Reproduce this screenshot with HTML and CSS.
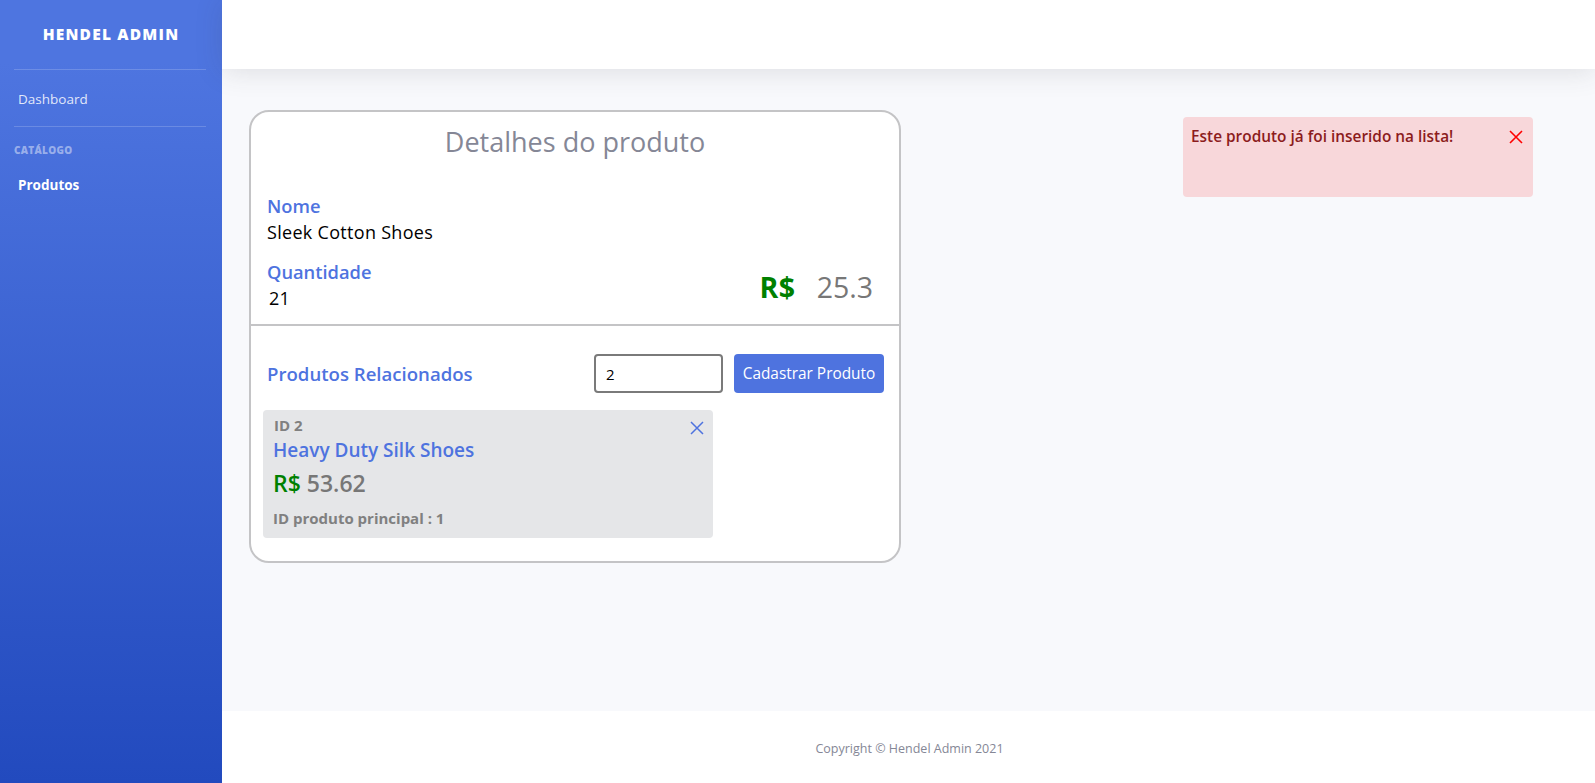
FILE: index.html
```html
<!DOCTYPE html>
<html lang="pt-BR">
<head>
<meta charset="utf-8">
<title>Hendel Admin</title>
<link rel="stylesheet" href="styles.css">
</head>
<body>
<div class="wrapper">
  <aside class="sidebar">
    <div class="brand">Hendel Admin</div>
    <hr class="side-divider">
    <a class="nav-link" href="#">Dashboard</a>
    <hr class="side-divider">
    <div class="side-heading">Catálogo</div>
    <a class="nav-link active" href="#">Produtos</a>
  </aside>
  <div class="content-col">
    <header class="topbar"></header>
    <main class="main">
      <section class="card">
        <div class="card-top">
          <h3 class="card-title">Detalhes do produto</h3>
          <div class="field">
            <div class="label">Nome</div>
            <div class="value">Sleek Cotton Shoes</div>
          </div>
          <div class="field-row">
            <div class="field">
              <div class="label">Quantidade</div>
              <div class="value qty">21</div>
            </div>
            <div class="price"><span class="currency">R$</span><span class="amount">25.3</span></div>
          </div>
        </div>
        <div class="card-bottom">
          <div class="related-head">
            <h4 class="related-title">Produtos Relacionados</h4>
            <div class="add-form">
              <input class="id-input" type="text" value="2">
              <button class="btn-primary" type="button">Cadastrar Produto</button>
            </div>
          </div>
          <div class="related-list">
            <div class="related-item">
              <button class="item-close" type="button" aria-label="Remover">
                <svg viewBox="0 0 14 14" width="14" height="14"><path d="M1 1L13 13M13 1L1 13" stroke="currentColor" stroke-width="1.5" fill="none"/></svg>
              </button>
              <div class="item-id">ID 2</div>
              <div class="item-name">Heavy Duty Silk Shoes</div>
              <div class="item-price"><span class="currency">R$</span> 53.62</div>
              <div class="item-parent">ID produto principal : 1</div>
            </div>
          </div>
        </div>
      </section>
    </main>
    <footer class="footer">Copyright © Hendel Admin 2021</footer>
  </div>
</div>
<div class="toast">
  <span class="toast-text">Este produto já foi inserido na lista!</span>
  <button class="toast-close" type="button" aria-label="Fechar">
    <svg viewBox="0 0 14 14" width="14" height="14"><path d="M1 1L13 13M13 1L1 13" stroke="currentColor" stroke-width="1.6" fill="none"/></svg>
  </button>
</div>
</body>
</html>
```

FILE: styles.css
```css
* { box-sizing: border-box; }

html, body {
  margin: 0;
  padding: 0;
  height: 100%;
}

body {
  font-family: "Open Sans", "Liberation Sans", sans-serif;
  font-size: 16px;
  color: #000;
  background: #fff;
}

.wrapper {
  display: flex;
  min-height: 783px;
}

/* Sidebar */
.sidebar {
  width: 222px;
  flex: 0 0 222px;
  background: linear-gradient(180deg, #4e75e0 8%, #224abe 100%);
  display: flex;
  flex-direction: column;
}

.brand {
  height: 69px;
  display: flex;
  align-items: center;
  justify-content: center;
  color: #fff;
  font-weight: 800;
  font-size: 15.5px;
  text-transform: uppercase;
  letter-spacing: 1.2px;
  padding-bottom: 2px;
}

.side-divider {
  margin: 0 16px 0 14px;
  border: 0;
  border-top: 1px solid rgba(255, 255, 255, 0.18);
  height: 0;
}

.nav-link {
  display: block;
  color: rgba(255, 255, 255, 0.85);
  text-decoration: none;
  font-size: 13.5px;
  line-height: 20px;
  padding: 19px 18px 17px;
}

.nav-link.active {
  color: #fff;
  font-weight: 700;
  padding: 18px 18px 12px;
}

.side-heading {
  color: rgba(255, 255, 255, 0.45);
  font-size: 10px;
  font-weight: 800;
  text-transform: uppercase;
  letter-spacing: 0.3px;
  padding: 16px 14px 0;
  line-height: 14px;
}

/* Content */
.content-col {
  flex: 1;
  display: flex;
  flex-direction: column;
  min-width: 0;
}

.topbar {
  height: 69px;
  background: #fff;
  box-shadow: 0 2px 28px 0 rgba(58, 59, 69, 0.15);
  position: relative;
  z-index: 1;
}

.main {
  flex: 1;
  background: #f8f9fc;
  padding: 41px 0 0 27px;
}

.footer {
  height: 72px;
  background: #fff;
  display: flex;
  align-items: center;
  justify-content: center;
  color: #858796;
  font-size: 12.5px;
  padding: 2px 0 0 2px;
}

/* Card */
.card {
  width: 652px;
  background: #fff;
  border: 2px solid #c4c4c6;
  border-radius: 20px;
}

.card-top {
  padding: 13px 16px 12px;
}

.card-title {
  margin: 0;
  text-align: center;
  font-size: 27px;
  font-weight: 400;
  line-height: 34px;
  color: #858796;
}

.field {
  margin-top: 33px;
}

.field-row {
  display: flex;
  align-items: center;
  justify-content: space-between;
  margin-top: 12px;
}

.field-row .field {
  margin-top: 0;
}

.label {
  color: #4e73df;
  font-size: 18.3px;
  font-weight: 600;
  line-height: 27px;
}

.value {
  font-size: 18px;
  letter-spacing: 0.3px;
  line-height: 27px;
  color: #000;
}

.qty {
  padding-left: 2px;
}

.price {
  font-size: 28.5px;
  line-height: 34px;
  padding: 4px 10px 0 0;
}

.currency {
  color: #008000;
  font-weight: 700;
  letter-spacing: 0.5px;
}

.amount {
  color: #777;
  margin-left: 21px;
}

.card-bottom {
  border-top: 2px solid #c4c4c6;
  padding: 28px 15px 23px 12px;
}

.related-head {
  display: flex;
  align-items: center;
  justify-content: space-between;
  height: 39px;
}

.related-title {
  margin: 0 0 0 4px;
  color: #4e73df;
  font-size: 18.6px;
  font-weight: 600;
}

.add-form {
  display: flex;
  gap: 11px;
}

.id-input {
  width: 129px;
  height: 39px;
  border: 2px solid #7a7a7a;
  border-radius: 4px;
  padding: 0 10px;
  font-family: inherit;
  font-size: 15px;
  color: #000;
  background: #fff;
}

.btn-primary {
  height: 39px;
  width: 150px;
  border: 0;
  border-radius: 4px;
  background: #4e73df;
  color: #fff;
  font-family: inherit;
  font-size: 15.4px;
  padding: 0;
}

.related-list {
  margin-top: 17px;
}

.related-item {
  position: relative;
  width: 450px;
  height: 128px;
  background: #e5e6e8;
  border-radius: 4px;
  padding: 5px 11px 9px 10px;
}

.item-close {
  position: absolute;
  top: 11px;
  right: 9px;
  width: 14px;
  height: 14px;
  padding: 0;
  border: 0;
  background: none;
  color: #4e73df;
  display: flex;
}

.item-id {
  color: #808080;
  font-size: 15px;
  font-weight: 700;
  line-height: 20px;
  padding-left: 1px;
}

.item-name {
  margin-top: 2px;
  color: #4e73df;
  font-size: 19px;
  font-weight: 600;
  line-height: 26px;
}

.item-price {
  margin-top: 5px;
  color: #777;
  font-size: 23px;
  font-weight: 600;
  line-height: 30px;
}

.item-price .currency {
  font-weight: 600;
  letter-spacing: 0;
}

.item-parent {
  margin-top: 10px;
  color: #808080;
  font-size: 15px;
  font-weight: 700;
  line-height: 20px;
}

/* Toast */
.toast {
  position: fixed;
  top: 117px;
  right: 62px;
  width: 350px;
  height: 80px;
  background: #f8d7da;
  border-radius: 4px;
  padding: 10px 10px 0 8px;
  display: flex;
  justify-content: space-between;
  align-items: flex-start;
}

.toast-text {
  color: #8c1c1c;
  font-size: 15.4px;
  font-weight: 600;
  line-height: 20px;
}

.toast-close {
  margin-top: 3px;
  width: 14px;
  height: 14px;
  padding: 0;
  border: 0;
  background: none;
  color: #ff0000;
  display: flex;
}
```
